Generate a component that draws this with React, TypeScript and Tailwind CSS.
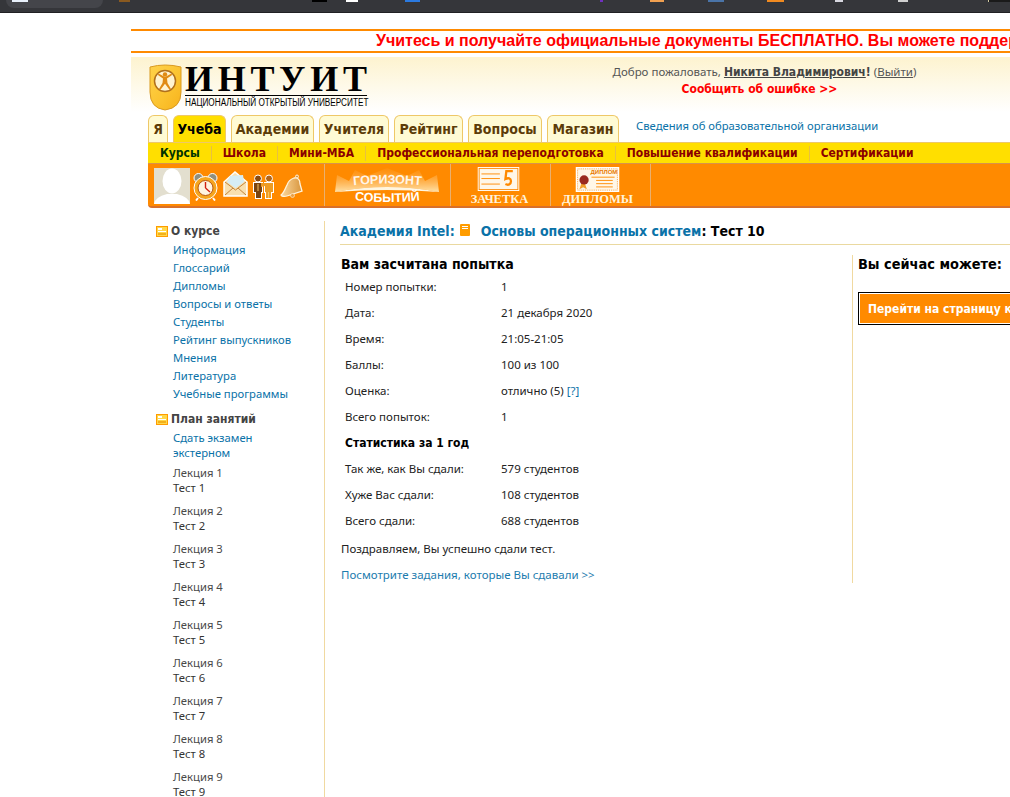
import React from "react";

const body = "font-['Noto_Sans','Open_Sans',sans-serif]";
const bold = "font-['DejaVu_Sans_Condensed','DejaVu_Sans',sans-serif] font-bold";

function FolderIcon() {
  return (
    <svg width="12" height="11" viewBox="0 0 12 11" className="shrink-0">
      <rect x="0.5" y="0.5" width="11" height="10" fill="#ffd84a" stroke="#ff9c00" />
      <rect x="2" y="2" width="4" height="2" fill="#fff" />
      <rect x="2" y="5" width="8" height="1" fill="#fff" />
      <rect x="2" y="7" width="8" height="2" fill="#f2b01c" />
    </svg>
  );
}

function Shield() {
  return (
    <svg width="33" height="47" viewBox="0 0 33 47" className="shrink-0">
      <defs>
        <linearGradient id="sh" x1="0" y1="0" x2="1" y2="1">
          <stop offset="0" stopColor="#ffd24a" />
          <stop offset="0.6" stopColor="#fbc22e" />
          <stop offset="1" stopColor="#f7b21c" />
        </linearGradient>
      </defs>
      <path d="M1 3 Q16 -1 32 3 L32 28 Q32 44 16 46 Q1 44 1 28 Z" fill="url(#sh)" stroke="#d99a20" />
      <circle cx="16" cy="17" r="10.5" fill="#fff3d0" stroke="#b0701c" strokeWidth="1.5" />
      <circle cx="16" cy="10.500" r="2.200" fill="#e08a14" />
      <path d="M16 13l6.500-3.500.6 1.400-5.100 3.600.5 4.500 3.500 6-1.500.7-4.500-6-4.500 6-1.500-.7 3.500-6 .5-4.500-5.100-3.600.6-1.400z" fill="#e08a14" />
    </svg>
  );
}

function Avatar() {
  return (
    <div className="w-9 h-9 bg-[#e3dfcf] overflow-hidden shrink-0">
      <svg width="36" height="36" viewBox="0 0 36 36">
        <ellipse cx="18" cy="13" rx="9.500" ry="12.500" fill="#fff" />
        <path d="M0 36 Q1 29 13 26 L23 26 Q35 29 36 36 Z" fill="#fff" />
      </svg>
    </div>
  );
}

function Clock() {
  return (
    <svg width="25" height="29" viewBox="0 0 25 29" className="shrink-0">
      <path d="M5 26l-2 2.500M20 26l2 2.500" stroke="#fff" strokeWidth="2" />
      <circle cx="5.500" cy="6" r="4.500" fill="#8f8f80" stroke="#fff" />
      <circle cx="19.500" cy="6" r="4.500" fill="#8f8f80" stroke="#fff" />
      <circle cx="12.500" cy="16" r="11.500" fill="#f5a51e" stroke="#fff" />
      <circle cx="12.500" cy="16" r="7.500" fill="#fff4e0" stroke="#b8560e" />
      <path d="M12.500 16V10M12.500 16l4.500 4" stroke="#d02010" strokeWidth="1.400" />
    </svg>
  );
}

function Mail() {
  return (
    <svg width="25" height="26" viewBox="0 0 25 26" className="shrink-0">
      <path d="M1 11 12 1 24 11V25H1Z" fill="#f8e0b0" stroke="#fff" strokeWidth="1.500" />
      <path d="M4 11 7 5 20 4 21 11 12.500 17z" fill="#d6edf5" />
      <path d="M2 11l10.500 8L23 11M2 24l8-7M23 24l-8-7" fill="none" stroke="#c4843a" />
    </svg>
  );
}

function People() {
  return (
    <svg width="21" height="25" viewBox="0 0 21 25" className="shrink-0">
      <path d="M1 9h8v9H8v6H3v-6H1zM12 9h8v9h-2v6h-5v-6h-1z" fill="none" stroke="#fff" strokeWidth="2" />
      <circle cx="5" cy="4.500" r="3.500" fill="#8a4a10" stroke="#fff" />
      <circle cx="16" cy="4.500" r="3.500" fill="#b0651c" stroke="#fff" />
      <path d="M1 9h8v9H8v6H3v-6H1z" fill="#7a4410" />
      <path d="M8 9l6 0 6 0v9h-2v6h-5v-6h-1v-6l-4 1z" fill="#ee9c24" />
      <path d="M5 10v7M15.500 18v6" stroke="#f6c060" />
    </svg>
  );
}

function Bell() {
  return (
    <svg width="23" height="24" viewBox="0 0 23 24" className="shrink-0">
      <defs>
        <linearGradient id="bl" x1="0" y1="0" x2="1" y2="0">
          <stop offset="0" stopColor="#fbd79c" />
          <stop offset="1" stopColor="#d8963e" />
        </linearGradient>
      </defs>
      <circle cx="17" cy="2.500" r="1.500" fill="#d8963e" stroke="#fff3dc" />
      <path d="M14 4c4-1 6 2 6 6l2 7-15 5c-3 1-6 0-6-1 3-2 4-6 6-10 1-3 4-6 7-7z" fill="url(#bl)" stroke="#fff3dc" strokeWidth="1.300" />
      <circle cx="12.500" cy="21.500" r="2" fill="#e7a04a" stroke="#fff3dc" strokeWidth="0.600" />
    </svg>
  );
}

function Horizon() {
  return (
    <svg width="125" height="42" viewBox="0 0 125 42" className="block">
      <defs>
        <linearGradient id="hz" x1="0" y1="1" x2="0" y2="0">
          <stop offset="0" stopColor="#ffe2a8" stopOpacity="1" />
          <stop offset="1" stopColor="#ffb050" stopOpacity="0.1" />
        </linearGradient>
        <path id="hz1" d="M22 22 Q62 17 103 22" />
        <path id="hz2" d="M27 36 Q62 40 98 36" />
      </defs>
      <path d="M10 28 L12 11 L24 17 L30 6 L42 12 L62 4 L82 12 L94 6 L100 17 L112 11 L114 28 Q62 18 10 28Z" fill="url(#hz)" />
      <path d="M10 28 Q62 18 114 28 Q62 24 10 28Z" fill="#fff6e0" />
      <text fontFamily="Liberation Sans" fontWeight="bold" fontSize="12.500" fill="#fff6ea">
        <textPath href="#hz1" startOffset="50%" textAnchor="middle">ГОРИЗОНТ</textPath>
      </text>
      <text fontFamily="Liberation Sans" fontWeight="bold" fontSize="12.500" fill="#fff">
        <textPath href="#hz2" startOffset="50%" textAnchor="middle">СОБЫТИЙ</textPath>
      </text>
    </svg>
  );
}

function Zachetka() {
  return (
    <svg width="45" height="26" viewBox="0 0 45 26" className="block mr-[5px]">
      <rect x="0.500" y="0.500" width="44" height="25" fill="#ff8a00" stroke="#fff" />
      <rect x="2" y="2" width="41" height="22" fill="#fff7e8" />
      <path d="M4 7.500h20M4 12.500h20M4 18.500h20" stroke="#ff8a00" />
      <path d="M38 4.500h-7l-1 8.500c3-1.500 6-1 6 2.500s-3 4.500-6 3" fill="none" stroke="#ff8a00" strokeWidth="2.500" />
    </svg>
  );
}

function Diplom() {
  return (
    <svg width="47" height="27" viewBox="0 0 47 27" className="block mr-[7px]">
      <rect x="0" y="0" width="47" height="27" fill="#fff" />
      <rect x="2" y="2" width="43" height="23" fill="#fff7e8" stroke="#f4a040" strokeDasharray="1 1" />
      <text x="16" y="8" fontFamily="Liberation Sans" fontWeight="bold" fontSize="6.500" fill="#e87a00">ДИПЛОМ</text>
      <path d="M17 11h25M22 14.500h18M22 18h18M22 21.500h18" stroke="#ff8a00" />
      <path d="M6 18l-2 6 4-2 4 2-2-6" fill="#f2a02a" />
      <circle cx="9" cy="14" r="5" fill="#9a2a20" />
    </svg>
  );
}

const Tab = ({ label, active = false, w }: { label: string; active?: boolean; w: string }) => (
  <div
    className={`${w} h-[27px] rounded-t-[6px] border border-b-0 border-[#eec868] flex items-center justify-center text-[14px] ${bold} ${
      active ? "bg-[#ffdf00] text-black" : "bg-[#fffbd4] text-[#5c3c08]"
    }`}
  >
    {label}
  </div>
);

const SubLink = ({ label, active = false, last = false }: { label: string; active?: boolean; last?: boolean }) => (
  <span className={`px-[11px] h-[15px] flex items-center text-[12px] whitespace-nowrap ${bold} ${active ? "text-[#003300]" : "text-[#8a0000]"} ${last ? "" : "border-r border-[#e8c040]"}`}>
    {label}
  </span>
);

const sideTop = ["Информация", "Глоссарий", "Дипломы", "Вопросы и ответы", "Студенты", "Рейтинг выпускников", "Мнения", "Литература", "Учебные программы"];
const lectures = [1, 2, 3, 4, 5, 6, 7, 8, 9];

const rows: [string, React.ReactNode][] = [
  ["Номер попытки:", "1"],
  ["Дата:", "21 декабря 2020"],
  ["Время:", "21:05-21:05"],
  ["Баллы:", "100 из 100"],
  ["Оценка:", <>отлично (5) <span className="text-[#0a72a8]">[?]</span></>],
  ["Всего попыток:", "1"],
];
const stats = [
  ["Так же, как Вы сдали:", "579 студентов"],
  ["Хуже Вас сдали:", "108 студентов"],
  ["Всего сдали:", "688 студентов"],
];

export default function App() {
  return (
    <div className={`w-[1010px] h-[797px] overflow-hidden bg-white text-[11.5px] text-[#222] ${body}`}>
      <div className="h-[13px] bg-[#35363a] border-b border-[#202124] flex">
        <div className="ml-[6px] w-[97px] h-[8px] rounded-b-[10px] bg-[#44454a] flex">
          <div className="ml-[6px] w-[16px] h-[2px] bg-[#e8f0fa]" />
        </div>
        <div className="ml-[16px] w-[11px] h-[2px] bg-[#8a5a20]" />
        <div className="ml-[182px] w-[15px] h-[2px] bg-black" />
        <div className="ml-[19px] w-[12px] h-[2px] bg-white" />
        <div className="ml-[47px] w-[15px] h-[2px] bg-[#2b7ae0]" />
        <div className="ml-[180px] w-[3px] h-[2px] bg-[#7030c0]" />
        <div className="ml-[47px] w-[14px] h-[2px] bg-[#f0a050]" />
        <div className="ml-[44px] w-[16px] h-[2px] bg-[#4a74a8]" />
        <div className="ml-[43px] w-[17px] h-[2px] bg-[#f08a20]" />
        <div className="ml-[51px] w-[8px] h-[2px] bg-[#d8d8e0]" />
        <div className="ml-[55px] w-[10px] h-[2px] bg-[#d0d0d0]" />
        <div className="ml-[80px] flex-1 h-[2px] bg-[#1a1a1a] border-l border-[#d0c8a0]" />
      </div>

      <div className="ml-[131px] w-[879px] overflow-hidden">
        <div className="mt-[16px] h-[24px] border-y-2 border-[#ff8a00] flex items-center whitespace-nowrap pl-[245px] text-[16px] leading-[20px] font-bold text-[#ff0000] font-['Liberation_Sans',sans-serif]">
          Учитесь и получайте официальные документы БЕСПЛАТНО. Вы можете поддержать нас
        </div>

        <div className="mt-[4px] h-[55px] bg-gradient-to-b from-[#fdf3cf] to-white flex">
          <div className="ml-[18px] mt-[7px] flex gap-[3px]">
            <Shield />
            <div className="flex flex-col w-[182px]">
              <div className="h-[30px] flex items-center justify-between text-[36px] leading-[30px] text-black font-['Liberation_Serif',serif] font-bold whitespace-nowrap">
                <span>И</span><span>Н</span><span>Т</span><span>У</span><span>И</span><span>Т</span>
              </div>
              <div className="mt-[1px] border-t border-black pt-[1px] text-[10px] leading-[11px] text-black whitespace-nowrap font-['Liberation_Sans',sans-serif] origin-left scale-x-[0.82] w-[222px]">НАЦИОНАЛЬНЫЙ ОТКРЫТЫЙ УНИВЕРСИТЕТ</div>
            </div>
          </div>
          <div className="ml-[244px] mt-[6px] w-[307px] flex flex-col items-center leading-[17px] text-[#555]">
            <div className="whitespace-nowrap">
              Добро пожаловать, <b className={`text-[12px] underline text-[#444] ${bold}`}>Никита Владимирович</b><b className={`text-[12px] text-[#444] ${bold}`}>!</b> (<span className="underline">Выйти</span>)
            </div>
            <div className={`mr-[10px] text-[12px] text-[#ff0000] whitespace-nowrap ${bold}`}>Сообщить об ошибке &gt;&gt;</div>
          </div>
        </div>

        <div className="ml-[17px] mt-[3px]">
          <div className="flex items-end h-[27px]">
            <div className="flex gap-[5px]">
              <Tab label="Я" w="w-[20px]" />
              <Tab label="Учеба" active w="w-[53px]" />
              <Tab label="Академии" w="w-[83px]" />
              <Tab label="Учителя" w="w-[70px]" />
              <Tab label="Рейтинг" w="w-[69px]" />
              <Tab label="Вопросы" w="w-[74px]" />
              <Tab label="Магазин" w="w-[72px]" />
            </div>
            <span className="ml-[17px] mb-[7px] text-[11.250px] text-[#0a72a8] whitespace-nowrap">Сведения об образовательной организации</span>
          </div>

          <div className="h-[21px] bg-[#ffdf00] border-t border-[#eec868] flex items-center pl-[1px]">
            <SubLink label="Курсы" active />
            <SubLink label="Школа" />
            <SubLink label="Мини-МБА" />
            <SubLink label="Профессиональная переподготовка" />
            <SubLink label="Повышение квалификации" />
            <SubLink label="Сертификации" last />
          </div>

          <div className="h-[45px] bg-[#ff8a00] border-t border-[#d9914a] border-b-2 border-b-[#d9702a] rounded-bl-[4px] flex">
            <div className="w-[177px] border-r border-[#e9b070] flex items-start pl-[6px] pt-[4px]">
              <Avatar />
              <span className="ml-[3px] mt-[4px]"><Clock /></span>
              <span className="ml-[5px] mt-[3px]"><Mail /></span>
              <span className="ml-[5px] mt-[6px]"><People /></span>
              <span className="ml-[6px] mt-[6px]"><Bell /></span>
            </div>
            <div className="w-[126px] border-r border-[#e9b070] flex justify-center">
              <Horizon />
            </div>
            <div className="w-[100px] border-r border-[#e9b070] flex flex-col items-center pt-[3px]">
              <Zachetka />
              <span className="mt-[1px] mr-[2px] text-[12.500px] leading-[14px] font-bold text-[#fff3dc] font-['Liberation_Serif',serif] whitespace-nowrap">ЗАЧЕТКА</span>
            </div>
            <div className="w-[100px] border-r border-[#e9b070] flex flex-col items-center pt-[3px]">
              <Diplom />
              <span className="mr-[6px] text-[12.500px] leading-[14px] font-bold text-[#fff3dc] font-['Liberation_Serif',serif] whitespace-nowrap">ДИПЛОМЫ</span>
            </div>
          </div>
        </div>

        <div className="ml-[25px] mt-[13px] flex">
          <aside className="w-[169px] h-[600px] border-r border-[#f0d9a0] shrink-0 text-[#0a72a8] text-[11.250px]">
            <div className={`mt-[2px] flex items-center gap-[3px] h-[16px] text-[12px] text-[#444] ${bold}`}><FolderIcon />О курсе</div>
            <div className="mt-[2px] pl-[17px]">
              {sideTop.map((s) => (
                <div key={s} className="h-[18px] leading-[18px] whitespace-nowrap">{s}</div>
              ))}
            </div>
            <div className={`mt-[8px] flex items-center gap-[3px] h-[16px] text-[12px] text-[#444] ${bold}`}><FolderIcon />План занятий</div>
            <div className="mt-[3px] pl-[17px] leading-[15px]">
              <div>Сдать экзамен</div>
              <div>экстерном</div>
              {lectures.map((n) => (
                <div key={n} className="mt-[5px] mb-[8px]">
                  <div className="text-[#4a4a4a]">Лекция {n}</div>
                  <div className="text-[#333]">Тест {n}</div>
                </div>
              ))}
            </div>
          </aside>

          <main className="ml-[15px] flex-1 min-w-0">
            <div className={`h-[24px] pb-[3px] border-b border-[#ead9a0] flex items-center text-[14px] whitespace-nowrap ${bold}`}>
              <span className="text-[#0a72a8]">Академия Intel:</span>
              <svg width="10" height="12" viewBox="0 0 10 12" className="ml-[5px] mb-[3px]"><rect width="10" height="12" fill="#ff9c00" rx="1" /><rect x="2" y="2" width="6" height="1" fill="#fff" /><rect x="2" y="4" width="6" height="1" fill="#fff" /></svg>
              <span className="ml-[11px] text-[#0a72a8]">Основы операционных систем</span><span className="text-black">: Тест 10</span>
            </div>
            <div className="flex mt-[10px]">
              <div className="w-[513px] h-[328px] border-r border-[#f0d9a0] shrink-0">
                <div className={`pl-[1px] text-[14px] leading-[18px] text-black ${bold}`}>Вам засчитана попытка</div>
                <div className="pt-[1px] pl-[5px] text-[#222]">
                  {rows.map(([a, b], i) => (
                    <div key={i} className="flex h-[26px] items-center whitespace-nowrap"><span className="w-[156px]">{a}</span><span>{b}</span></div>
                  ))}
                  <div className={`h-[26px] flex items-center text-[12px] text-black ${bold}`}>Статистика за 1 год</div>
                  {stats.map(([a, b]) => (
                    <div key={a} className="flex h-[26px] items-center whitespace-nowrap"><span className="w-[156px]">{a}</span><span>{b}</span></div>
                  ))}
                </div>
                <div className="pl-[1px] mt-[5px] leading-[20px]">Поздравляем, Вы успешно сдали тест.</div>
                <div className="pl-[1px] mt-[6px] leading-[20px] text-[#1c7cae]">Посмотрите задания, которые Вы сдавали &gt;&gt;</div>
              </div>
              <div className="pl-[5px] flex-1 min-w-0 whitespace-nowrap">
                <div className={`text-[14.400px] leading-[18px] text-black ${bold}`}>Вы сейчас можете:</div>
                <div className="mt-[19px] h-[33px] w-[240px] border border-black p-[1px]">
                  <div className={`h-full bg-[#ff8a00] text-[12px] text-white flex items-center pl-[8px] overflow-hidden ${bold}`}>Перейти на страницу курса</div>
                </div>
              </div>
            </div>
          </main>
        </div>
      </div>
    </div>
  );
}
